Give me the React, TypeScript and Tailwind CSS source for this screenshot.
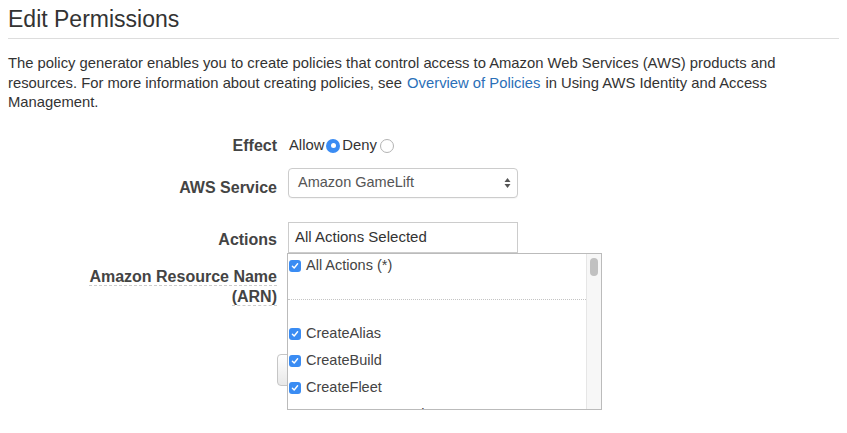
import React from "react";

function Check() {
  return (
    <span className="flex h-[12px] w-[12px] shrink-0 items-center justify-center rounded-[3px] bg-[#3a8cf3]">
      <svg width="8" height="8" viewBox="0 0 8 8" fill="none">
        <path d="M1.4 4.2 L3.2 6 L6.6 1.8" stroke="white" strokeWidth="1.4" strokeLinecap="round" strokeLinejoin="round" />
      </svg>
    </span>
  );
}

function Item({ label }: { label: string }) {
  return (
    <div className="flex h-[27px] items-center pl-[1px]">
      <Check />
      <span className="ml-[5px] text-[14.5px] text-[#444]">{label}</span>
    </div>
  );
}

export default function App() {
  return (
    <div className="relative h-[433px] w-[847px] overflow-hidden bg-white px-[8px] font-['Liberation_Sans',Arial,sans-serif] text-[#333]">
      <div className="border-b border-[#dddddd] pb-[6px] pt-[6px]">
        <h1 className="text-[23px] leading-[26px] font-normal text-[#333]">Edit Permissions</h1>
      </div>
      <p className="mt-[15px] whitespace-nowrap text-[14.8px] leading-[19.5px] text-[#333]">
        The policy generator enables you to create policies that control access to Amazon Web Services (AWS) products and
        <br />
        resources. For more information about creating policies, see{" "}
        <a className="mx-[1px] text-[#2a6fb8]">Overview of Policies</a> in Using AWS Identity and Access
        <br />
        Management.
      </p>

      <div className="mt-[23px] flex flex-col">
        {/* Effect */}
        <div className="flex h-[20px] items-center">
          <div className="w-[269px] text-right text-[16px] font-bold leading-[20px] text-[#444]">Effect</div>
          <div className="ml-[12px] flex items-center text-[14.8px] text-[#333]">
            <span>Allow</span>
            <span className="ml-[2px] flex h-[14px] w-[14px] items-center justify-center rounded-full bg-[#3a8cf3]">
              <span className="h-[5px] w-[5px] rounded-full bg-white" />
            </span>
            <span className="ml-[2px]">Deny</span>
            <span className="ml-[3px] h-[14px] w-[14px] rounded-full border border-[#b3b3b3] bg-white" />
          </div>
        </div>

        {/* AWS Service */}
        <div className="mt-[12px] flex items-start">
          <div className="w-[269px] pt-[10px] text-right text-[16px] font-bold leading-[20px] text-[#444]">AWS Service</div>
          <div className="ml-[11px] flex h-[30px] w-[230px] items-center justify-between rounded-[4px] border border-[#cccccc] bg-white pl-[9px] pr-[6px] text-[14.5px] text-[#555] shadow-[0_1px_1px_rgba(0,0,0,0.04)]">
            <span>Amazon GameLift</span>
            <svg width="7" height="12" viewBox="0 0 7 12">
              <path d="M3.5 1 L6.5 5 L0.5 5 Z" fill="#555" />
              <path d="M3.5 11 L6.5 7 L0.5 7 Z" fill="#555" />
            </svg>
          </div>
        </div>

        {/* Actions */}
        <div className="mt-[24px] flex items-start">
          <div className="w-[269px] pt-[8px] text-right text-[16px] font-bold leading-[20px] text-[#444]">Actions</div>
          <div className="relative ml-[11px]">
            <div className="flex h-[31px] w-[230px] items-center border border-[#cccccc] bg-white pl-[6px] text-[15px] text-[#333]">
              All Actions Selected
            </div>
            <div className="absolute left-[-1px] top-[31px] z-10 flex h-[157px] w-[315px] overflow-hidden border border-[#bbbbbb] bg-white">
              <div className="flex-1">
                <div className="h-[46px] border-b border-dotted border-[#c4c4c4]">
                  <div className="flex h-[25px] items-center pl-[1px]">
                    <Check />
                    <span className="ml-[5px] text-[14.5px] text-[#444]">All Actions (*)</span>
                  </div>
                </div>
                <div className="pt-[21px]">
                  <Item label="CreateAlias" />
                  <Item label="CreateBuild" />
                  <Item label="CreateFleet" />
                  <Item label="CreateGameSession" />
                </div>
              </div>
              <div className="w-[15px] border-l border-[#e6e6e6] bg-[#f7f7f7] pt-[4px]">
                <div className="ml-[3px] h-[18px] w-[8px] rounded-full bg-[#c1c1c1]" />
              </div>
            </div>
          </div>
        </div>

        {/* ARN */}
        <div className="mt-[6px] flex items-start">
          <div className="w-[269px] pt-[8px] text-right text-[16px] font-bold leading-[20px] text-[#444]">
            <span className="border-b border-dashed border-[#cccccc]">Amazon Resource Name</span>
            <br />
            <span className="border-b border-dashed border-[#cccccc]">(ARN)</span>
          </div>
          <div className="ml-[11px] h-[31px] w-[230px] border border-[#cccccc] bg-white" />
        </div>

        {/* Button */}
        <div className="mt-[47px] flex">
          <button className="ml-[269px] h-[32px] w-[130px] rounded-[4px] border border-[#c6c6c6] bg-gradient-to-b from-white to-[#e8e8e8] text-[14px] text-[#333]">
            Add Statement
          </button>
        </div>
      </div>
    </div>
  );
}
